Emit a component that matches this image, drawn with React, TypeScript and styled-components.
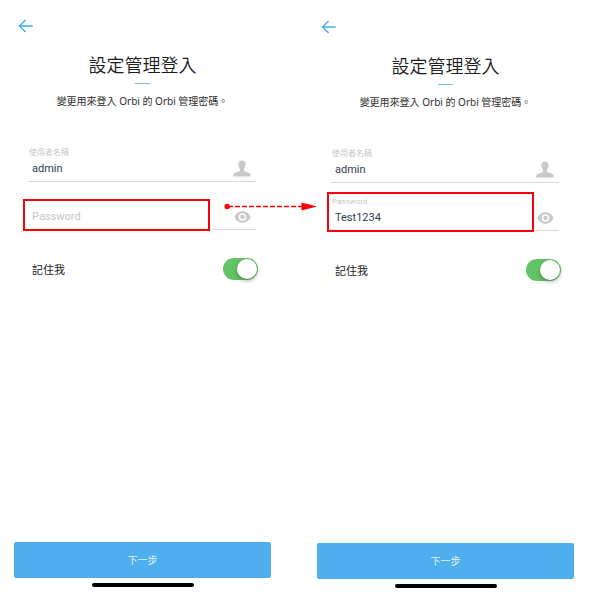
import React from 'react';
import styled, { createGlobalStyle } from 'styled-components';

const GlobalStyle = createGlobalStyle`
  *, *::before, *::after { box-sizing: border-box; }
  body {
    margin: 0;
    background: #fff;
    font-family: "Noto Sans CJK TC", sans-serif;
  }
  button, input { font: inherit; }
`;

const Comparison = styled.main`
  display: grid;
  grid-template-columns: 1fr 1fr;
  column-gap: 46px;
  min-height: 100vh;
  padding: 0 16px 0 14px;
`;

const Screen = styled.section<{ $lowered?: boolean }>`
  display: flex;
  flex-direction: column;
  min-width: 0;
  padding: ${(p) => (p.$lowered ? '20px 0 4px' : '19px 0 5px')};
`;

const BackButton = styled.button`
  display: flex;
  align-self: flex-start;
  margin-left: 4px;
  padding: 0;
  border: 0;
  background: none;
  color: #3eaaf0;
  cursor: pointer;
`;

const Title = styled.h1`
  margin: 18px 0 0;
  font-size: 18px;
  font-weight: 350;
  line-height: 26px;
  color: #1c1c1c;
  text-align: center;
`;

const Rule = styled.hr`
  width: 15px;
  height: 1px;
  margin: 6px auto 0;
  border: 0;
  background: #6fbdf0;
`;

const Subtitle = styled.p`
  margin: 9px 0 0;
  font: 400 10px/16px "Noto Sans", "Noto Sans CJK TC", sans-serif;
  color: #2e2e2e;
  text-align: center;
  white-space: nowrap;
`;

const Form = styled.form`
  display: flex;
  flex: 1;
  flex-direction: column;
  margin-top: 25px;
`;

const FieldRow = styled.div`
  position: relative;
  display: flex;
  align-items: flex-end;
  height: 48px;
  margin: 0 15px 0 14px;
  border-bottom: 1px solid #d9d9d9;
`;

const FieldText = styled.div`
  display: flex;
  flex: 1;
  flex-direction: column;
  gap: 3px;
  min-width: 0;
  padding-bottom: 4px;
  font-family: Roboto, "Noto Sans CJK TC", sans-serif;
`;

const FieldLabel = styled.label`
  padding-left: 1px;
  font-size: 8px;
  line-height: 10px;
  color: #c8c8c8;
`;

const TextInput = styled.input`
  width: 100%;
  height: 16px;
  padding: 0 0 0 4px;
  border: 0;
  outline: 0;
  background: none;
  font-size: 11px;
  line-height: 16px;
  color: #2f3a52;

  &::placeholder {
    color: #c4c4c4;
    opacity: 1;
  }
`;

const FieldIcon = styled.span`
  display: flex;
  align-items: flex-start;
  height: 18px;
  margin: 0 5px 3px 0;
  color: #c9c9c9;
`;

const RevealButton = styled.button`
  display: flex;
  align-items: center;
  height: 18px;
  margin: 0 5px 3px 0;
  padding: 0;
  border: 0;
  background: none;
  color: #c9c9c9;
  cursor: pointer;
`;

const Highlight = styled.div<{ $tall?: boolean }>`
  position: absolute;
  top: ${(p) => (p.$tall ? '9px' : '17px')};
  bottom: -2px;
  left: ${(p) => (p.$tall ? '-4px' : '-5px')};
  right: ${(p) => (p.$tall ? '25px' : '46px')};
  border: 2px solid #fb0007;
  pointer-events: none;
`;

const FlowArrow = styled.svg`
  position: absolute;
  top: 20px;
  right: -61px;
  pointer-events: none;
`;

const RememberRow = styled.label`
  display: flex;
  align-items: center;
  justify-content: space-between;
  margin: 28px 13px 0 18px;
  font-size: 11px;
  line-height: 22px;
  color: #222;
`;

const Switch = styled.input`
  display: flex;
  justify-content: flex-start;
  width: 35px;
  height: 22px;
  margin: 0;
  padding: 1px;
  appearance: none;
  border-radius: 11px;
  background: #d5d5d5;
  cursor: pointer;

  &::before {
    content: '';
    width: 20px;
    height: 20px;
    border-radius: 50%;
    background: #fff;
    box-shadow: 0 2px 4px rgba(0, 0, 0, 0.3);
  }

  &:checked {
    justify-content: flex-end;
    background: #62c466;
  }
`;

const NextButton = styled.button`
  height: 36px;
  margin-top: auto;
  padding: 0;
  border: 0;
  border-radius: 2px;
  background: #4fafee;
  font-size: 10px;
  line-height: 16px;
  color: #e4f3fd;
  cursor: pointer;
`;

const HomeIndicator = styled.div`
  width: 102px;
  height: 4px;
  margin: 5px auto 0;
  border-radius: 2px;
  background: #000;
`;

const BackIcon = () => (
  <svg width="16" height="14" viewBox="0 0 16 14" fill="none" stroke="currentColor" strokeWidth="1.3" aria-hidden="true">
    <path d="M14.7 7H1.5M7.6 1L1.5 7l6.1 6" />
  </svg>
);

const PersonIcon = () => (
  <svg width="18" height="17" viewBox="0 0 18 17" fill="currentColor" aria-hidden="true">
    <path d="M9 0.4C6.7 0.4 5.4 1.8 5.4 3.9C5.4 5.9 5.9 7.7 7 8.7V10.2C7 11.3 5.8 11.6 3.7 12.2C1.2 12.9 0.1 13.7 0.1 16.4H17.9C17.9 13.7 16.8 12.9 14.3 12.2C12.2 11.6 11 11.3 11 10.2V8.7C12.1 7.7 12.6 5.9 12.6 3.9C12.6 1.8 11.3 0.4 9 0.4Z" />
  </svg>
);

const EyeIcon = () => (
  <svg width="17" height="12" viewBox="0 0 17 12" aria-hidden="true">
    <path fill="currentColor" d="M8.5 0.2C4.8 0.2 1.7 2.6 0.4 6C1.7 9.4 4.8 11.8 8.5 11.8S15.3 9.4 16.6 6C15.3 2.6 12.2 0.2 8.5 0.2Z" />
    <circle cx="8.5" cy="6" r="3" fill="currentColor" stroke="#fff" strokeWidth="1.6" />
  </svg>
);

const Arrow = () => (
  <FlowArrow width="93" height="10" viewBox="0 0 93 10" aria-hidden="true">
    <circle cx="3.2" cy="4.5" r="2.7" fill="#fb0007" />
    <path d="M4 4.5H78" stroke="#fb0007" strokeWidth="1.6" strokeDasharray="5 2" />
    <path d="M77.5 0.5L93 4.5L77.5 8.5Z" fill="#fb0007" />
  </FlowArrow>
);

interface LoginScreenProps {
  id: string;
  password?: string;
  lowered?: boolean;
}

const LoginScreen = ({ id, password = '', lowered }: LoginScreenProps) => {
  const filled = password !== '';
  return (
    <Screen $lowered={lowered}>
      <BackButton type="button" aria-label="返回">
        <BackIcon />
      </BackButton>
      <Title>設定管理登入</Title>
      <Rule />
      <Subtitle>變更用來登入 Orbi 的 Orbi 管理密碼。</Subtitle>
      <Form onSubmit={(e) => e.preventDefault()}>
        <FieldRow>
          <FieldText>
            <FieldLabel htmlFor={`${id}-user`}>使用者名稱</FieldLabel>
            <TextInput id={`${id}-user`} type="text" defaultValue="admin" />
          </FieldText>
          <FieldIcon>
            <PersonIcon />
          </FieldIcon>
        </FieldRow>
        <FieldRow>
          <FieldText>
            {filled && <FieldLabel htmlFor={`${id}-password`}>Password</FieldLabel>}
            <TextInput
              id={`${id}-password`}
              type="text"
              aria-label={filled ? undefined : 'Password'}
              placeholder="Password"
              defaultValue={password}
            />
          </FieldText>
          <RevealButton type="button" aria-label="顯示密碼">
            <EyeIcon />
          </RevealButton>
          <Highlight $tall={filled} />
          {!filled && <Arrow />}
        </FieldRow>
        <RememberRow>
          記住我
          <Switch type="checkbox" role="switch" defaultChecked />
        </RememberRow>
        <NextButton type="submit">下一步</NextButton>
      </Form>
      <HomeIndicator />
    </Screen>
  );
};

export default function App() {
  return (
    <>
      <GlobalStyle />
      <Comparison lang="zh-Hant">
        <LoginScreen id="empty" />
        <LoginScreen id="filled" password="Test1234" lowered />
      </Comparison>
    </>
  );
}
